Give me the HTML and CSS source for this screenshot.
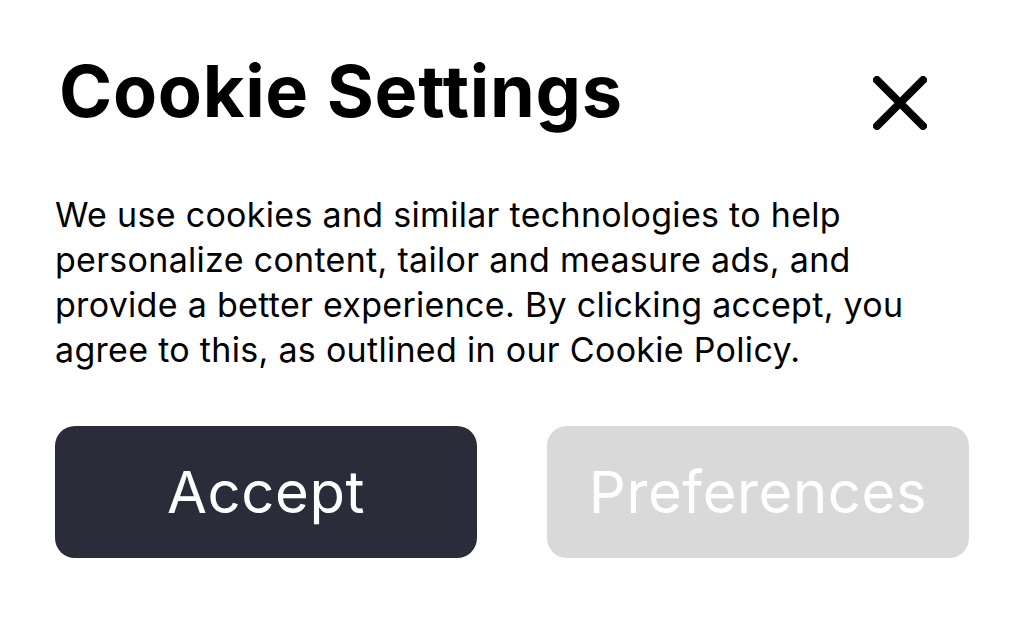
FILE: index.html
```html
<!DOCTYPE html>
<html lang="en">
<head>
<meta charset="utf-8">
<link rel="stylesheet" href="styles.css">
</head>
<body>
<div class="dialog">
  <div class="header">
    <h1 class="title">Cookie Settings</h1>
    <button class="close" aria-label="Close">
      <svg width="54" height="54" viewBox="0 0 54 54"><path d="M4 4 L50 50 M50 4 L4 50" stroke="#000" stroke-width="8" stroke-linecap="round" fill="none"/></svg>
    </button>
  </div>
  <p class="text">We use cookies and similar technologies to help personalize content, tailor and measure ads, and provide a better experience. By clicking accept, you agree to this, as outlined in our Cookie Policy.</p>
  <div class="actions">
    <button class="btn btn-primary">Accept</button>
    <button class="btn btn-secondary">Preferences</button>
  </div>
</div>
</body>
</html>
```
FILE: styles.css
```css
html, body { margin: 0; padding: 0; background: #fff; }
body { font-family: "Inter", "Noto Sans", sans-serif; color: #000; }
.dialog { padding: 48px 55px 0 55px; width: 914px; }
.header { display: flex; justify-content: space-between; align-items: center; padding-right: 42px; }
.title { margin: 0; padding-left: 4px; font-size: 72px; font-weight: 700; line-height: 86px; letter-spacing: 0.7px; }
.close { background: none; border: 0; padding: 0; margin-top: 24px; display: flex; }
.text { margin: 58px 0 0 0; font-size: 34px; line-height: 45px; font-weight: 400; letter-spacing: 0.3px; }
.actions { display: flex; gap: 70px; margin-top: 54px; }
.btn { flex: 1; height: 132px; border: 0; border-radius: 20px; font-family: inherit; font-size: 58px; font-weight: 400; letter-spacing: 0.6px; color: #fff; }
.btn-primary { background: #2a2c3a; }
.btn-secondary { background: #d9d9d9; }
```
